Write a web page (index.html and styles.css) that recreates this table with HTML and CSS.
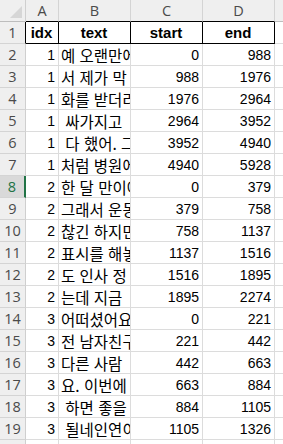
FILE: index.html
```html
<!DOCTYPE html>
<html lang="ko">
<head>
<meta charset="utf-8">
<link rel="stylesheet" href="styles.css">
</head>
<body>
<div class="sheet">
  <div class="corner"><span class="tri"></span></div>
  <div class="colh">A</div><div class="colh">B</div><div class="colh">C</div><div class="colh">D</div><div class="colh">&nbsp;</div>

  <div class="rowh rowh-first">1</div>
  <div class="c hd">idx</div><div class="c hd">text</div><div class="c hd">start</div><div class="c hd">end</div><div class="c"></div>

  <div class="rowh">2</div><div class="c n">1</div><div class="c t">예 오랜만에 뵙네요</div><div class="c n">0</div><div class="c n">988</div><div class="c"></div>
  <div class="rowh">3</div><div class="c n">1</div><div class="c t">서 제가 막 뭐라고</div><div class="c n">988</div><div class="c n">1976</div><div class="c"></div>
  <div class="rowh">4</div><div class="c n">1</div><div class="c t">화를 받더라고요</div><div class="c n">1976</div><div class="c n">2964</div><div class="c"></div>
  <div class="rowh">5</div><div class="c n">1</div><div class="c t">&nbsp;싸가지고 </div><div class="c n">2964</div><div class="c n">3952</div><div class="c"></div>
  <div class="rowh">6</div><div class="c n">1</div><div class="c t">&nbsp;다 했어. 그래서</div><div class="c n">3952</div><div class="c n">4940</div><div class="c"></div>
  <div class="rowh">7</div><div class="c n">1</div><div class="c t">처럼 병원에 가서</div><div class="c n">4940</div><div class="c n">5928</div><div class="c"></div>
  <div class="rowh active">8</div><div class="c n">2</div><div class="c t">한 달 만이에요</div><div class="c n">0</div><div class="c n">379</div><div class="c"></div>
  <div class="rowh">9</div><div class="c n">2</div><div class="c t">그래서 운동을</div><div class="c n">379</div><div class="c n">758</div><div class="c"></div>
  <div class="rowh">10</div><div class="c n">2</div><div class="c t">찮긴 하지만</div><div class="c n">758</div><div class="c n">1137</div><div class="c"></div>
  <div class="rowh">11</div><div class="c n">2</div><div class="c t">표시를 해놓고</div><div class="c n">1137</div><div class="c n">1516</div><div class="c"></div>
  <div class="rowh">12</div><div class="c n">2</div><div class="c t">도 인사 정 도는</div><div class="c n">1516</div><div class="c n">1895</div><div class="c"></div>
  <div class="rowh">13</div><div class="c n">2</div><div class="c t">는데 지금 </div><div class="c n">1895</div><div class="c n">2274</div><div class="c"></div>
  <div class="rowh">14</div><div class="c n">3</div><div class="c t">어떠셨어요</div><div class="c n">0</div><div class="c n">221</div><div class="c"></div>
  <div class="rowh">15</div><div class="c n">3</div><div class="c t">전 남자친구가</div><div class="c n">221</div><div class="c n">442</div><div class="c"></div>
  <div class="rowh">16</div><div class="c n">3</div><div class="c t">다른 사람 </div><div class="c n">442</div><div class="c n">663</div><div class="c"></div>
  <div class="rowh">17</div><div class="c n">3</div><div class="c t">요. 이번에</div><div class="c n">663</div><div class="c n">884</div><div class="c"></div>
  <div class="rowh">18</div><div class="c n">3</div><div class="c t">&nbsp;하면 좋을 </div><div class="c n">884</div><div class="c n">1105</div><div class="c"></div>
  <div class="rowh">19</div><div class="c n">3</div><div class="c t">&nbsp;될네인연이</div><div class="c n">1105</div><div class="c n">1326</div><div class="c"></div>
  <div class="rowh">20</div><div class="c n">3</div><div class="c t">다시 한번 </div><div class="c n">1326</div><div class="c n">1547</div><div class="c"></div>
</div>
</body>
</html>
```

FILE: styles.css
```css
html, body {
  margin: 0;
  padding: 0;
  background: #ffffff;
  overflow: hidden;
}

.sheet {
  display: grid;
  grid-template-columns: 26px 33px 72px 72px 72px 72px;
  grid-auto-rows: 22px;
  font-family: "Liberation Sans", "Noto Sans CJK KR", sans-serif;
  font-size: 14px;
  color: #000;
}

.corner {
  position: relative;
  background: #efefef;
  border-right: 1px solid #cfcfcf;
  border-bottom: 1px solid #bdbdbd;
  box-sizing: border-box;
}

.tri {
  position: absolute;
  right: 3px;
  bottom: 3px;
  width: 0;
  height: 0;
  border-left: 12px solid transparent;
  border-bottom: 12px solid #d6d6d6;
}

.colh {
  background: #efefef;
  border-right: 1px solid #d4d4d4;
  border-bottom: 1px solid #bdbdbd;
  box-sizing: border-box;
  display: flex;
  align-items: center;
  justify-content: center;
  font-family: "Open Sans", "Noto Sans", sans-serif;
  font-size: 14.5px;
  color: #4a4a4a;
}

.rowh {
  background: #efefef;
  border-right: 1px solid #cfcfcf;
  border-bottom: 1px solid #d4d4d4;
  box-sizing: border-box;
  display: flex;
  align-items: center;
  justify-content: center;
  font-family: "Open Sans", "Noto Sans", sans-serif;
  font-size: 14.5px;
  color: #4a4a4a;
}

.rowh-first {
  border-right-color: #000;
}

.rowh.active {
  background: #d9d9d9;
  color: #217346;
  border-right: 2px solid #217346;
}

.c {
  border-right: 1px solid #dcdcdc;
  border-bottom: 1px solid #dcdcdc;
  box-sizing: border-box;
  display: flex;
  align-items: center;
  overflow: hidden;
  white-space: pre;
  padding: 0 3px 0 2px;
}

.n {
  justify-content: flex-end;
}

.t {
  font-family: "Noto Sans CJK KR", sans-serif;
  font-size: 15.5px;
  padding-left: 2px;
}

.hd {
  justify-content: center;
  font-weight: bold;
  font-size: 15px;
  border-right-color: #000;
  border-bottom-color: #000;
}

.colh:nth-child(2), .colh:nth-child(3), .colh:nth-child(4), .colh:nth-child(5) {
  border-bottom-color: #000;
}
```
